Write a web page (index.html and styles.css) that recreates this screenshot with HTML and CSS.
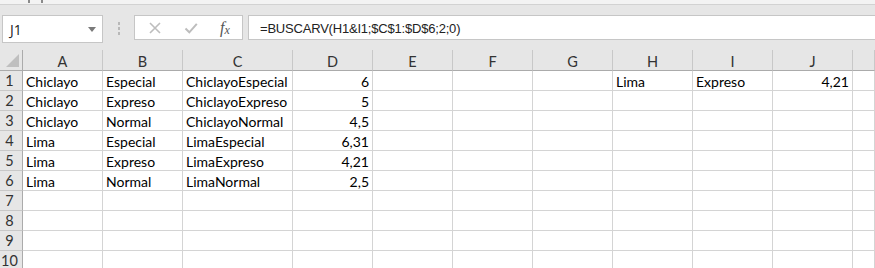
FILE: index.html
```html
<!DOCTYPE html>
<html lang="es">
<head>
    <meta charset="UTF-8">
    <title>BUSCARV</title>
    <link rel="stylesheet" href="styles.css">
</head>
<body>
    <div class="ribbon-edge">
        <span class="tick"></span><span class="tick"></span>
    </div>

    <div class="formula-bar">
        <div class="name-box">
            <span>J1</span>
            <svg class="caret" width="8" height="5" viewBox="0 0 8 5"><path d="M0 0h8L4 5z" fill="#7a7a7a"/></svg>
        </div>
        <div class="grip"><i></i><i></i><i></i></div>
        <div class="fx-box">
            <svg width="14" height="14" viewBox="0 0 14 14"><path d="M2 2l10 10M12 2L2 12" stroke="#bdbdbd" stroke-width="1.6" fill="none"/></svg>
            <svg width="14" height="14" viewBox="0 0 14 14"><path d="M1.5 7.5l3.8 3.8L12.8 2.8" stroke="#bdbdbd" stroke-width="2" fill="none"/></svg>
            <span class="fx">f<sub>x</sub></span>
        </div>
        <div class="formula">=BUSCARV(H1&amp;I1;$C$1:$D$6;2;0)</div>
    </div>

    <div class="sheet" id="sheet">
        <div class="corner">
            <svg width="13" height="13" viewBox="0 0 13 13"><path d="M13 0V13H0z" fill="#bfbfbf"/></svg>
        </div>
    </div>

    <script>
        // K is only partly on screen, so its letter is left out
        const cols = ['A', 'B', 'C', 'D', 'E', 'F', 'G', 'H', 'I', 'J', ''];
        const data = {
            1: { A: 'Chiclayo', B: 'Especial', C: 'ChiclayoEspecial', D: '6', H: 'Lima', I: 'Expreso', J: '4,21' },
            2: { A: 'Chiclayo', B: 'Expreso', C: 'ChiclayoExpreso', D: '5' },
            3: { A: 'Chiclayo', B: 'Normal', C: 'ChiclayoNormal', D: '4,5' },
            4: { A: 'Lima', B: 'Especial', C: 'LimaEspecial', D: '6,31' },
            5: { A: 'Lima', B: 'Expreso', C: 'LimaExpreso', D: '4,21' },
            6: { A: 'Lima', B: 'Normal', C: 'LimaNormal', D: '2,5' }
        };
        const numeric = ['D', 'J'];
        const sheet = document.getElementById('sheet');

        cols.forEach(c => {
            const h = document.createElement('div');
            h.className = 'col-head';
            h.textContent = c;
            sheet.appendChild(h);
        });

        for (let r = 1; r <= 10; r++) {
            const rh = document.createElement('div');
            rh.className = 'row-head';
            rh.textContent = r;
            sheet.appendChild(rh);
            cols.forEach(c => {
                const cell = document.createElement('div');
                cell.className = 'cell' + (numeric.includes(c) ? ' num' : '');
                cell.textContent = (data[r] && data[r][c]) || '';
                sheet.appendChild(cell);
            });
        }
    </script>
</body>
</html>
```

FILE: styles.css
```css
html, body {
    margin: 0;
    padding: 0;
    overflow: hidden;
    background: #e6e6e6;
    font-family: "Open Sans", "Noto Sans", sans-serif;
}
.ribbon-edge {
    height: 4px;
    background: #f3f3f3;
    border-bottom: 1px solid #d2d2d2;
    display: flex;
    gap: 11px;
    padding-left: 28px;
}
.tick {
    width: 2px;
    height: 3px;
    background: #8a8a8a;
}
.formula-bar {
    display: flex;
    align-items: flex-start;
    padding: 10px 0 0 2px;
    height: 35px;
}
.name-box {
    width: 101px;
    height: 28px;
    box-sizing: border-box;
    background: #fff;
    border: 1px solid #c6c6c6;
    display: flex;
    align-items: center;
    justify-content: space-between;
    padding: 0 6px 0 7px;
    font-size: 14px;
    color: #222;
}
.caret { margin-top: 1px; }
.grip {
    width: 31px;
    display: flex;
    flex-direction: column;
    align-items: center;
    gap: 2px;
    padding-top: 7px;
}
.grip i {
    width: 2px;
    height: 3px;
    background: #b8b8b8;
}
.fx-box {
    width: 109px;
    height: 25px;
    box-sizing: border-box;
    background: #fff;
    border: 1px solid #c6c6c6;
    display: flex;
    align-items: center;
    gap: 22px;
    padding-left: 13px;
}
.fx {
    font-family: "Liberation Serif", serif;
    font-style: italic;
    font-size: 16px;
    color: #555;
    line-height: 1;
}
.fx sub {
    font-size: 12px;
    vertical-align: -1px;
}
.formula {
    flex: 1;
    height: 25px;
    box-sizing: border-box;
    margin-left: 5px;
    background: #fff;
    border: 1px solid #c6c6c6;
    border-right: none;
    padding: 2px 0 0 11px;
    font-family: "Liberation Sans", sans-serif;
    font-size: 13px;
    letter-spacing: -0.2px;
    line-height: 21px;
    color: #222;
    white-space: nowrap;
}
.sheet {
    display: grid;
    grid-template-columns: 23px 80px 80px 110px 80px 80px 80px 80px 80px 80px 80px minmax(0, 1fr);
    grid-template-rows: 21px;
    grid-auto-rows: 20px;
    font-size: 14px;
    font-family: "Lato", "Open Sans", sans-serif;
    background: #fff;
}
.corner, .col-head {
    background: #e6e6e6;
    border-bottom: 1px solid #ababab;
    box-sizing: border-box;
}
.corner {
    border-right: 1px solid #ababab;
    display: flex;
    align-items: flex-end;
    justify-content: flex-end;
    padding: 0 3px 3px 0;
}
.col-head {
    border-right: 1px solid #c8c8c8;
    display: flex;
    align-items: center;
    justify-content: center;
    color: #333;
    font-size: 14.5px;
    padding-top: 2px;
}
.row-head {
    background: #e6e6e6;
    border-right: 1px solid #ababab;
    border-bottom: 1px solid #c8c8c8;
    box-sizing: border-box;
    display: flex;
    align-items: center;
    justify-content: center;
    padding-right: 3px;
    color: #333;
    font-size: 14.5px;
}
.cell {
    border-right: 1px solid #d4d4d4;
    border-bottom: 1px solid #d4d4d4;
    box-sizing: border-box;
    padding: 1px 3px 0;
    line-height: 19px;
    color: #000;
    white-space: nowrap;
    overflow: hidden;
}
.cell.num { text-align: right; }
```
